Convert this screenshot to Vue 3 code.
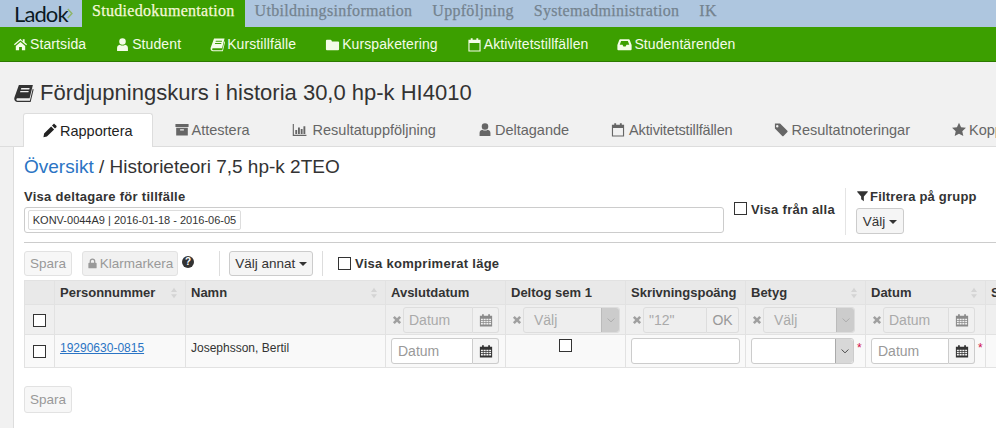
<script setup>
const ic = {
  home: 'M8 1.8 1 7.8l.9 1L8 3.7l6.1 5.1.9-1-2.6-2.2V2.4h-2v2.5zM3 9.5 8 5.3l5 4.2V14H9.500v-3.400h-3V14H3z',
  user: 'M8 1.200a3.500 3.500 0 1 1 0 7 3.500 3.500 0 0 1 0-7zM2.200 14.800v-3c0-2 1.200-3.300 3-3.600.8.6 1.700.9 2.800.9s2-.3 2.800-.9c1.800.3 3 1.600 3 3.600v3z',
  book: 'M4.300 1.500H15.500l-2.600 10.600H3.600c-.9 0-1.300.4-1.300 1 0 .7.5 1 1.200 1h9.600l2.300-9.600.7.6-2.400 10H3.200C1.700 15.100.6 14 .6 12.500c0-.4.1-.8.2-1.200zM6.200 4l-.3 1.100h6.700l.3-1.100zM5.500 6.300l-.3 1.100h6.700l.3-1.100z',
  folder: 'M2 3h3.800c.6 0 1 .3 1.200.8l.4.9H14c.6 0 1 .4 1 1V13c0 .6-.4 1-1 1H2c-.6 0-1-.4-1-1V4c0-.6.4-1 1-1z',
  calendar: 'M1.500 3H4V1.200h2V3h4V1.200h2V3h2.500v12.500h-13zM2.700 6.400v7.900h10.600V6.400z',
  inbox: 'M3.400 2.500h9.200c.5 0 .8.3 1 .7l2 5.300v4.500c0 .6-.4 1-1 1H1.400c-.6 0-1-.4-1-1V8.500l2-5.300c.2-.4.5-.7 1-.7zM4.400 4.300 2.900 8.300h3l.9 1.700h2.400l.9-1.700h3l-1.500-4z',
  pencil: 'M11.600 1.200c.4-.4 1-.4 1.400 0l1.800 1.800c.4.4.4 1 0 1.400l-1.500 1.500-3.200-3.200zM9.200 3.600l3.200 3.200-7.700 7.700-3.700.7.700-3.900z',
  archive: 'M1 2h14v3.400H1zM1.800 6.200h12.400V14.400H1.800zM6 7.800v1.300h4V7.800z',
  bars: 'M.8 2H2v11.600h13.400v1.200H.8zM3.500 8.500h2v4.300h-2zM6.400 5.800h2v7h-2zM9.300 7.400h2v5.400h-2zM12.200 4.400h2v8.400h-2z',
  tag: 'M1 1.500h6l7.800 7.800c.4.4.4 1 0 1.400l-4.100 4.100c-.4.400-1 .4-1.400 0L1.500 7V1.500zM4 3.200a1.300 1.300 0 1 0 0 2.600 1.300 1.300 0 0 0 0-2.600z',
  star: 'M8 .8l2.200 4.800 5.200.6-3.900 3.600 1.100 5.200L8 12.400l-4.600 2.600 1.100-5.200L.6 6.200l5.200-.6z',
  filter: 'M1 1.800h14v1L9.800 8.500v6.500L6.200 12.300V8.500L1 2.800z',
  lock: 'M3 7h.9V4.900a4.100 4.100 0 0 1 8.200 0V7h.9c.5 0 1 .4 1 1v6c0 .6-.5 1-1 1H3c-.5 0-1-.4-1-1V8c0-.6.5-1 1-1zM5.700 7h4.600V4.900a2.300 2.300 0 0 0-4.600 0z',
  times: 'M1.500 4.400 4.400 1.500 8 5.100 11.600 1.500 14.500 4.400 10.900 8 14.500 11.600 11.600 14.500 8 10.900 4.400 14.500 1.500 11.600 5.100 8z',
  cal: 'M1 3h2.500V1.300h2V3h5V1.300h2V3H15v12.500H1zM2.200 6.500v1.700h2.200V6.500zm3 0v1.700h2.400V6.500zm3.200 0v1.700h2.400V6.500zm3.200 0v1.700h2.200V6.500zM2.200 9v1.700h2.200V9zm3 0v1.700h2.400V9zm3.200 0v1.700h2.400V9zm3.200 0v1.700h2.200V9zM2.200 11.500v1.700h2.200v-1.700zm3 0v1.700h2.400v-1.700zm3.200 0v1.700h2.400v-1.700zm3.200 0v1.700h2.200v-1.700z',
  sort: 'M8 1l4 5.500H4zM4 9.500h8L8 15z',
  chevron: 'M3.500 6 8 10.500 12.500 6'
}
const mainNav = [
  { t: 'Startsida', i: 'home' },
  { t: 'Student', i: 'user' },
  { t: 'Kurstillfälle', i: 'book' },
  { t: 'Kurspaketering', i: 'folder' },
  { t: 'Aktivitetstillfällen', i: 'calendar' },
  { t: 'Studentärenden', i: 'inbox' }
]
const tabs = [
  { t: 'Attestera', i: 'archive' },
  { t: 'Resultatuppföljning', i: 'bars' },
  { t: 'Deltagande', i: 'user' },
  { t: 'Aktivitetstillfällen', i: 'calendar' },
  { t: 'Resultatnoteringar', i: 'tag' },
  { t: 'Kopplingar', i: 'star' }
]
</script>

<template>
  <div class="page">
    <header class="topbar">
      <div class="logo"><span class="logo-text">Ladok</span><svg class="logo-mark" viewBox="0 0 8 16"><path d="M1 2 6.500 8 1 14" fill="none" stroke="#8fb56a" stroke-width="2"/></svg></div>
      <a class="top active">Studiedokumentation</a>
      <a class="top">Utbildningsinformation</a>
      <a class="top">Uppföljning</a>
      <a class="top">Systemadministration</a>
      <a class="top">IK</a>
    </header>
    <nav class="mainnav">
      <a v-for="n in mainNav" :key="n.t" class="navitem">
        <svg class="i" viewBox="0 0 16 16"><path :d="ic[n.i]" fill-rule="evenodd"/></svg>{{ n.t }}
      </a>
    </nav>
    <main class="main">
      <h1 class="title"><svg class="title-ico" viewBox="0 0 16 16"><path :d="ic.book" fill-rule="evenodd"/></svg>Fördjupningskurs i historia 30,0 hp-k HI4010</h1>
      <div class="tabs">
        <a class="tab current"><svg class="i" viewBox="0 0 16 16"><path :d="ic.pencil"/></svg>Rapportera</a>
        <a v-for="t in tabs" :key="t.t" class="tab" :class="'tab-' + t.i"><svg class="i" viewBox="0 0 16 16"><path :d="ic[t.i]" fill-rule="evenodd"/></svg>{{ t.t }}</a>
      </div>
      <section class="panel">
        <h2 class="crumb"><a class="link">Översikt</a> / Historieteori 7,5 hp-k 2TEO</h2>
        <div class="filters">
          <div class="occasion">
            <label class="lbl">Visa deltagare för tillfälle</label>
            <div class="tagbox"><span class="tagchip">KONV-0044A9 | 2016-01-18 - 2016-06-05</span></div>
          </div>
          <label class="check-all"><span class="cb"></span><span class="lbl">Visa från alla</span></label>
          <div class="group">
            <div class="lbl"><svg class="filter-ico" viewBox="0 0 16 16"><path :d="ic.filter"/></svg>Filtrera på grupp</div>
            <button class="btn">Välj <span class="caret"></span></button>
          </div>
        </div>
        <div class="toolbar">
          <button class="btn off spara">Spara</button>
          <button class="btn off klar"><svg class="lock" viewBox="0 0 16 16"><path :d="ic.lock" fill-rule="evenodd"/></svg>Klarmarkera</button>
          <span class="help">?</span>
          <span class="vsep first"></span>
          <button class="btn annat">Välj annat <span class="caret"></span></button>
          <span class="vsep"></span>
          <label class="compact"><span class="cb"></span><span class="lbl">Visa komprimerat läge</span></label>
        </div>
        <div class="tablewrap">
          <table class="grid">
            <colgroup>
              <col class="c1" /><col class="c2" /><col class="c3" /><col class="c4" /><col class="c4" /><col class="c4" /><col class="c4" /><col class="c4" /><col class="c4" />
            </colgroup>
            <thead>
              <tr class="head">
                <th></th>
                <th><div class="th">Personnummer<svg class="sort" viewBox="0 0 16 16"><path :d="ic.sort"/></svg></div></th>
                <th><div class="th">Namn<svg class="sort" viewBox="0 0 16 16"><path :d="ic.sort"/></svg></div></th>
                <th><div class="th">Avslutdatum</div></th>
                <th><div class="th">Deltog sem 1</div></th>
                <th><div class="th">Skrivningspoäng</div></th>
                <th><div class="th">Betyg<svg class="sort" viewBox="0 0 16 16"><path :d="ic.sort"/></svg></div></th>
                <th><div class="th">Datum<svg class="sort" viewBox="0 0 16 16"><path :d="ic.sort"/></svg></div></th>
                <th><div class="th">Status</div></th>
              </tr>
              <tr class="filter">
                <td class="cb-cell"><span class="cb"></span></td>
                <td></td>
                <td></td>
                <td><div class="fc"><svg class="x" viewBox="0 0 16 16"><path :d="ic.times"/></svg><span class="ctl w70 dis">Datum</span><span class="addon dis"><svg class="cal" viewBox="0 0 16 16"><path :d="ic.cal" fill-rule="evenodd"/></svg></span></div></td>
                <td><div class="fc"><svg class="x" viewBox="0 0 16 16"><path :d="ic.times"/></svg><span class="sel w97 dis">Välj<span class="arrow"><svg viewBox="0 0 16 16"><path :d="ic.chevron" fill="none" stroke="#aaa" stroke-width="1.300"/></svg></span></span></div></td>
                <td><div class="fc"><svg class="x" viewBox="0 0 16 16"><path :d="ic.times"/></svg><span class="ctl w64 dis">"12"</span><span class="addon ok dis">OK</span></div></td>
                <td><div class="fc"><svg class="x" viewBox="0 0 16 16"><path :d="ic.times"/></svg><span class="sel w92 dis">Välj<span class="arrow"><svg viewBox="0 0 16 16"><path :d="ic.chevron" fill="none" stroke="#aaa" stroke-width="1.300"/></svg></span></span></div></td>
                <td><div class="fc"><svg class="x" viewBox="0 0 16 16"><path :d="ic.times"/></svg><span class="ctl w66 dis">Datum</span><span class="addon dis"><svg class="cal" viewBox="0 0 16 16"><path :d="ic.cal" fill-rule="evenodd"/></svg></span></div></td>
                <td></td>
              </tr>
            </thead>
            <tbody>
              <tr class="row">
                <td class="cb-cell"><span class="cb"></span></td>
                <td class="txt"><a class="link under">19290630-0815</a></td>
                <td class="txt">Josephsson, Bertil</td>
                <td><div class="fc"><span class="ctl w82">Datum</span><span class="addon"><svg class="cal on" viewBox="0 0 16 16"><path :d="ic.cal" fill-rule="evenodd"/></svg></span></div></td>
                <td class="mid"><span class="cb"></span></td>
                <td><div class="fc"><span class="ctl w109"></span></div></td>
                <td><div class="fc"><span class="sel w103"><span class="arrow on"><svg viewBox="0 0 16 16"><path :d="ic.chevron" fill="none" stroke="#444" stroke-width="1.300"/></svg></span></span><span class="req">*</span></div></td>
                <td><div class="fc"><span class="ctl w78">Datum</span><span class="addon"><svg class="cal on" viewBox="0 0 16 16"><path :d="ic.cal" fill-rule="evenodd"/></svg></span><span class="req">*</span></div></td>
                <td></td>
              </tr>
            </tbody>
          </table>
        </div>
        <button class="btn off spara bottom">Spara</button>
      </section>
    </main>
  </div>
</template>

<style>
html, body { margin: 0; overflow: hidden; background: #fff; }
</style>

<style scoped>
.page { width: 996px; height: 428px; overflow: hidden; font-family: "Liberation Sans", Arial, sans-serif; color: #333; font-size: 14px; }
svg { fill: currentColor; flex: none; }
.topbar { display: flex; height: 27px; background: #aec6df; font-family: "Liberation Serif", serif; font-size: 16px; font-weight: 400; letter-spacing: .3px; -webkit-text-stroke: .25px currentColor; }
.logo { width: 82px; display: flex; align-items: center; padding-left: 14px; box-sizing: border-box; -webkit-text-stroke: 0; }
.logo-text { font-family: Lato, sans-serif; font-weight: 400; font-size: 22px; color: #0b1a24; letter-spacing: -.9px; line-height: 24px; }
.logo-mark { width: 6px; height: 13px; margin-left: -1px; }
.top { padding: 0 10px; line-height: 22px; color: #74838f; }
.top.active { background: #3c9f00; color: #f4f8d8; }
.mainnav { display: flex; gap: 29px; height: 34px; padding-left: 13px; background: #3c9f00; border-bottom: 1px solid #2c7a00; color: #f4fce8; align-items: center; font-size: 14px; letter-spacing: .1px; }
.navitem { display: flex; align-items: center; }
.navitem .i { width: 15px; height: 15px; margin-right: 2px; }
.main { background: #f1f1f1; height: 366px; padding-top: 18px; box-sizing: border-box; }
.title { margin: 0 0 0 13px; display: flex; align-items: center; font-size: 22px; font-weight: 400; line-height: 26px; height: 26px; color: #333; }
.title-ico { width: 21px; height: 20px; margin-right: 6px; }
.tabs { display: flex; padding-left: 23px; margin-top: 7px; height: 33px; gap: 1px; border-bottom: 1px solid #ddd; font-size: 14.5px; }
.tab { display: flex; align-items: center; padding: 0 20px; color: #666; height: 33px; }
.tab .i { width: 16px; height: 15px; margin-right: 2px; }
.tab-bars .i { width: 17px; margin-right: 5px; }
.tab-calendar { letter-spacing: -.15px; }
.tab-calendar .i { margin-right: 3px; }
.tab.current { background: #fff; color: #222; border: 1px solid #ddd; border-bottom: 0; border-radius: 3px 3px 0 0; padding: 0 19px; height: 34px; box-sizing: border-box; position: relative; z-index: 1; }
.tab.current .i { margin-left: -1px; margin-right: 2px; }
.panel { margin-left: 13px; height: 281px; background: #fff; border-left: 1px solid #ddd; padding-left: 10px; position: relative; box-sizing: border-box; }
.crumb { margin: 0; padding-top: 9px; font-size: 19px; font-weight: 400; line-height: 22px; color: #333; }
.link { color: #2a74c4; }
.under { text-decoration: underline; }
.filters { display: flex; height: 53px; margin-top: 11px; border-bottom: 1px solid #ccc; width: 972px; }
.lbl { font-weight: 700; font-size: 13px; line-height: 15px; color: #333; letter-spacing: .28px; }
.occasion { width: 700px; display: flex; flex-direction: column; }
.tagbox { margin-top: 3px; height: 26px; box-sizing: border-box; border: 1px solid #ccc; border-radius: 3px; background: #fff; padding: 2px 3px; }
.tagchip { display: block; width: 213px; box-sizing: border-box; height: 20px; line-height: 18px; border: 1px solid #ddd; border-radius: 2px; font-size: 11px; text-align: center; white-space: nowrap; }
.cb { display: inline-block; width: 13px; height: 13px; box-sizing: border-box; border: 1px solid #333; background: #fff; flex: none; }
.check-all { display: flex; align-items: flex-start; margin-left: 10px; padding-top: 13px; width: 111px; gap: 4px; }
.group { border-left: 1px solid #e4e4e4; padding-left: 10px; height: 46px; margin-top: -1px; padding-top: 1px; }
.group .lbl { letter-spacing: .2px; }
.filter-ico { width: 13px; height: 12px; margin-right: 1px; vertical-align: -1px; }
.group .btn { display: block; margin-top: 4px; height: 26px; width: 48px; padding: 0; }
.btn { font: 13.5px "Liberation Sans", Arial, sans-serif; height: 25px; border: 1px solid #ccc; border-radius: 3px; background: #f5f5f5; color: #333; box-sizing: border-box; padding: 0; white-space: nowrap; }
.off { color: #999; background: #f7f7f7; border-color: #e2e2e2; }
.caret { display: inline-block; border-top: 4px solid #333; border-left: 4px solid transparent; border-right: 4px solid transparent; vertical-align: 2px; }
.toolbar { display: flex; align-items: center; height: 25px; margin-top: 8px; }
.spara { width: 48px; }
.klar { width: 96px; margin-left: 10px; display: flex; align-items: center; justify-content: center; background: #f1f1f1; }
.lock { width: 11px; height: 11px; margin-right: 2px; }
.help { width: 12px; height: 12px; line-height: 12px; margin-left: 4px; margin-top: -4px; border-radius: 50%; background: #333; color: #fff; font-size: 10px; font-weight: 700; text-align: center; }
.vsep { width: 1px; height: 25px; background: #ddd; margin: 0 6px 0 9px; }
.vsep.first { margin: 0 9px 0 25px; }
.annat { width: 84px; text-align: right; padding-right: 5px; }
.compact { display: flex; align-items: center; gap: 4px; margin-left: 9px; }
.tablewrap { margin-top: 4px; width: 972px; overflow: hidden; }
.grid { table-layout: fixed; border-collapse: collapse; width: 1081px; font-size: 12px; }
.c1 { width: 30px; } .c2 { width: 131px; } .c3 { width: 200px; } .c4 { width: 120px; }
.grid th, .grid td { border: 1px solid #e2e2e2; padding: 0; box-sizing: border-box; }
.head { height: 24px; background: #e9e9e9; }
.th { display: flex; align-items: center; justify-content: space-between; padding: 0 5px; font-size: 13px; font-weight: 700; text-align: left; white-space: nowrap; }
.sort { width: 12px; height: 12px; color: #d4d4d4; }
.filter { height: 30px; background: #efefef; }
.row { height: 33px; background: #f9f9f9; }
.cb-cell, .mid { text-align: center; }
.cb-cell .cb, .mid .cb { vertical-align: middle; }
.mid { vertical-align: top; padding-top: 3px !important; }
.txt { padding: 0 5px !important; vertical-align: top; line-height: 26px; font-size: 12px; }
.fc { display: flex; align-items: center; padding-left: 5px; height: 28px; }
.x { width: 10px; height: 10px; color: #a0a0a0; margin-right: 1px; margin-left: 1px; }
.ctl, .sel { display: block; height: 26px; line-height: 24px; box-sizing: border-box; border: 1px solid #ccc; border-radius: 3px 0 0 3px; background: #fff; color: #999; font-size: 14px; padding-left: 6px; }
.sel { border-radius: 3px; position: relative; padding-left: 10px; }
.ctl.w109 { border-radius: 3px; }
.ctl.dis { padding-left: 5px; }
.dis { background: #eee; color: #aaa; border-color: #ddd; }
.addon { display: flex; align-items: center; justify-content: center; width: 26px; height: 26px; box-sizing: border-box; border: 1px solid #ccc; border-left: 0; border-radius: 0 3px 3px 0; background: #f5f5f5; }
.addon.dis { background: #f0f0f0; border-color: #ddd; }
.ok { width: 32px; font-size: 14px; color: #999; }
.w64 { width: 64px; } .w66 { width: 66px; } .w70 { width: 70px; } .w78 { width: 78px; } .w82 { width: 82px; } .w92 { width: 92px; } .w97 { width: 97px; } .w103 { width: 103px; } .w109 { width: 109px; }
.cal { width: 14px; height: 14px; color: #8a8a8a; }
.cal.on { color: #333; }
.arrow { position: absolute; right: 0; top: 0; bottom: 0; width: 17px; background: #ccc; border-left: 1px solid #bbb; border-radius: 0 3px 3px 0; display: flex; align-items: center; justify-content: center; }
.arrow svg { width: 12px; height: 12px; fill: none; }
.arrow.on { background: #d8d8d8; border-left-color: #aaa; }
.req { color: #d0104a; font-size: 12px; font-weight: 400; margin-left: 3px; align-self: flex-start; margin-top: 4px; }
.bottom { display: block; margin-top: 18px; height: 27px; }
</style>
